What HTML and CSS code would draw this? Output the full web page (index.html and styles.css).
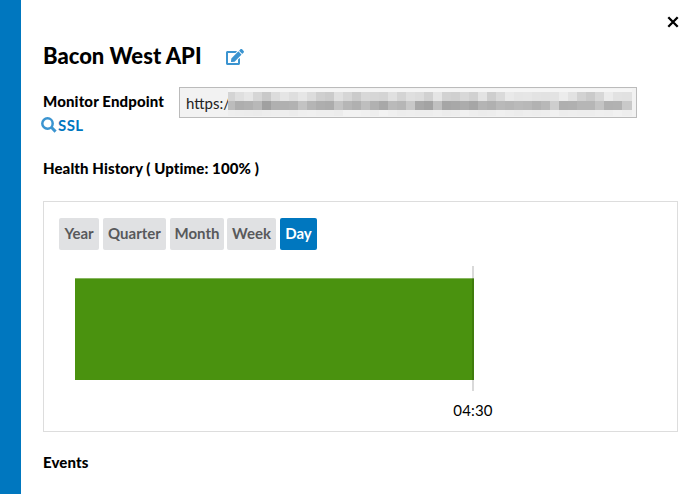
FILE: index.html
```html
<!DOCTYPE html>
<html lang="en">
<head>
<meta charset="utf-8">
<title>Bacon West API</title>
<link rel="stylesheet" href="styles.css">
</head>
<body>
<main class="panel">
  <button class="close" aria-label="Close"><svg width="12" height="12" viewBox="0 0 12 12"><path d="M1.3 1.3 10.700 10.700M10.700 1.300 1.300 10.700" fill="none" stroke="#000" stroke-width="2.300"/></svg></button>
  <header class="heading">
    <h1><span>Bacon West API</span></h1>
    <svg class="edit" width="18" height="16" viewBox="0 0 576 512"><path fill="#3b94d0" d="M402.600 83.200l90.200 90.200c3.800 3.800 3.800 10 0 13.800L274.400 405.600l-92.800 10.300c-12.400 1.400-22.900-9.100-21.500-21.500l10.300-92.800L388.800 83.200c3.800-3.800 10-3.800 13.800 0zm162-22.900l-48.800-48.800c-15.200-15.200-39.900-15.200-55.200 0l-35.400 35.400c-3.800 3.800-3.800 10 0 13.800l90.200 90.200c3.800 3.800 10 3.800 13.800 0l35.400-35.400c15.200-15.300 15.200-40 0-55.200zM384 346.200V448H64V128h229.800c3.200 0 6.200-1.300 8.500-3.500l40-40c7.600-7.600 2.200-20.500-8.500-20.500H48C21.500 64 0 85.500 0 112v352c0 26.500 21.500 48 48 48h352c26.500 0 48-21.500 48-48V306.200c0-10.700-12.900-16-20.500-8.500l-40 40c-2.200 2.300-3.500 5.300-3.500 8.500z"/></svg>
  </header>
  <section class="endpoint">
    <div class="labels">
      <div class="label">Monitor Endpoint</div>
      <div class="ssl"><svg width="16" height="16" viewBox="0 0 16 16"><g fill="none" stroke="#3b94d0"><circle cx="6.500" cy="6.500" r="5.200" stroke-width="2.500"/><path d="M10.300 10.300 14.600 14.600" stroke-width="3"/></g></svg><span>SSL</span></div>
    </div>
    <div class="field"><span class="url">https:/</span><svg class="mosaic" id="mosaic" width="404" height="27" viewBox="0 0 404 27" shape-rendering="crispEdges"></svg></div>
  </section>
  <h2 class="history"><span>Health History ( Uptime: 100% )</span></h2>
  <section class="card">
    <nav class="tabs">
      <button class="year">Year</button><button class="quarter">Quarter</button><button class="month">Month</button><button class="week">Week</button><button class="day active">Day</button>
    </nav>
    <div class="chart"><div class="bar"></div><div class="marker"></div></div>
    <div class="time">04:30</div>
  </section>
  <h2 class="events"><span>Events</span></h2>
</main>
<script src="mosaic.js"></script>
</body>
</html>
```
FILE: mosaic.js
```js
const rows = [
  { y: 0, h: 3, cells: 'f5 f5 f5 f5 f5 f5 f5 f5 f5 f5 f5 f5 f5 f5 f5 f5 f5 f5 f5 f5 f5 f5 f5 f5 f5 f5 f5 f5 f5 f5 f5 f5 f5 f5 f5 f5 f5 f5 f5 f5 f5 f5 f5 f5 f5' },
  { y: 3, h: 9, cells: 'd4 df e6 d6 c9 dc e5 de e6 dc cf cb e0 d6 cb d8 d6 d4 e0 d4 df dc d1 e5 d2 d0 d8 d1 e3 ce da e9 e5 e6 e3 e2 e3 ec e2 d2 ca d7 eb e2 e1' },
  { y: 12, h: 9, cells: 'bc ae b1 b8 a0 b0 b0 b2 c3 b5 ae ac c3 b6 b0 be b1 a8 ba b6 c8 a8 a3 c0 a6 a8 ac a6 b4 b0 b9 b6 ba b8 b2 b8 ce af b0 b6 b6 c4 b1 b2 c9' },
  { y: 21, h: 6, cells: 'ee ed ec eb ed ee ee ec ef f0 ee ee ec f2 f2 f0 ee f3 f0 ed ee ed ed ef ec ed f1 ee ec ed f0 ee ec ee ed ee f1 ed ee ed ed ef ee f1 ee' }
];
let markup = '';
rows.forEach(row => row.cells.split(' ').forEach((c, i) => {
  const x = i ? i * 9 - 2 : 0;
  const w = i === 0 ? 7 : i === 44 ? 10 : 9;
  markup += `<rect x="${x}" y="${row.y}" width="${w}" height="${row.h}" fill="#${c}${c}${c}"/>`;
}));
document.getElementById('mosaic').innerHTML = markup;
```
FILE: styles.css
```css
* { box-sizing: border-box; }
body { margin: 0; background: #fff; color: #000; font: 15px/20px Lato, "Liberation Sans", sans-serif; }
button { border: 0; padding: 0; background: none; font: inherit; }
svg { display: block; flex: none; }
h1, h2 { margin: 0; white-space: nowrap; }
.panel { height: 494px; border-left: 21px solid #0077bf; padding: 16px 7px 0 22px; display: flex; flex-direction: column; overflow: hidden; }
.close { align-self: flex-end; width: 12px; height: 12px; }
.heading { height: 30px; margin-top: 13px; display: flex; align-items: center; gap: 25px; }
h1 { width: 158px; font-size: 22px; line-height: 30px; font-weight: 900; }
.edit { margin-top: 2px; }
.endpoint { margin-top: 16px; display: flex; height: 53px; }
.labels { width: 136px; padding-top: 4px; }
.label { font-weight: 900; white-space: nowrap; letter-spacing: .13px; }
.ssl { display: flex; align-items: center; height: 20px; margin: 4px 0 0 -2px; color: #0077bf; font-weight: 700; letter-spacing: .4px; }
.ssl svg { margin-right: 1px; }
.field { width: 458px; height: 31px; border: 1px solid #bbb; background: #f2f2f2; padding: 1px 0 0 6px; display: flex; color: #222; }
.url { width: 42px; line-height: 28px; white-space: nowrap; }
h2 { font-size: 15px; line-height: 20px; font-weight: 900; letter-spacing: .1px; }
.history { margin-top: 18px; }
.card { margin-top: 23px; width: 635px; height: 231px; border: 1px solid #ddd; padding: 16px 15px 0; flex: none; }
.tabs { display: flex; gap: 4px; height: 32px; }
.tabs button { height: 32px; border-radius: 2px; background: #e0e1e3; color: #58595b; font-weight: 700; white-space: nowrap; padding-bottom: 3px; }
.year { width: 40px; }
.quarter { width: 63px; }
.month { width: 54px; }
.week { width: 49px; margin-left: -1px; }
.day { width: 37px; }
.tabs .active { background: #0077bf; color: #fff; }
.chart { display: flex; height: 126px; margin: 15px 0 0 16px; }
.bar { width: 399px; height: 102px; margin-top: 13px; background: #4a920f; border-top: 1px solid #86b660; }
.marker { width: 2px; height: 125px; margin: 1px 0 0 -2px; background: rgba(0,0,0,.15); }
.time { width: 60px; margin: 9px 0 0 384px; text-align: center; letter-spacing: .15px; }
.events { margin-top: 20px; }
```
